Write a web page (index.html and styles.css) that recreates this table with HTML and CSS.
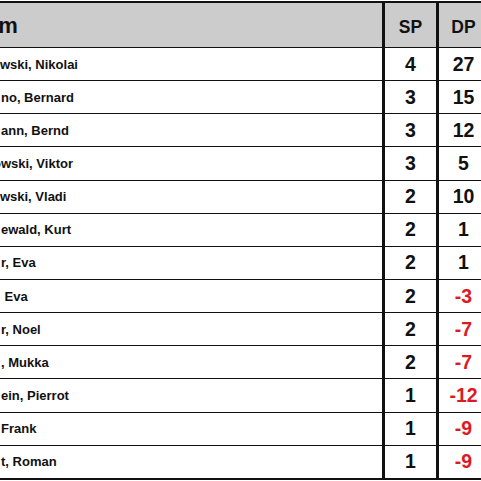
FILE: index.html
```html
<!DOCTYPE html>
<html>
<head>
<meta charset="utf-8">
<link rel="stylesheet" href="styles.css">
</head>
<body>
<div class="table">
  <div class="row head">
    <div class="name"><span class="shift-head">am</span></div>
    <div class="num">SP</div>
    <div class="num">DP</div>
  </div>
  <div class="row"><div class="name"><span class="shift2">owski, Nikolai</span></div><div class="num">4</div><div class="num">27</div></div>
  <div class="row"><div class="name">no, Bernard</div><div class="num">3</div><div class="num">15</div></div>
  <div class="row"><div class="name">ann, Bernd</div><div class="num">3</div><div class="num">12</div></div>
  <div class="row"><div class="name"><span class="shift1">owski, Viktor</span></div><div class="num">3</div><div class="num">5</div></div>
  <div class="row"><div class="name"><span class="shift2">owski, Vladi</span></div><div class="num">2</div><div class="num">10</div></div>
  <div class="row"><div class="name">ewald, Kurt</div><div class="num">2</div><div class="num">1</div></div>
  <div class="row"><div class="name">r, Eva</div><div class="num">2</div><div class="num">1</div></div>
  <div class="row"><div class="name">&nbsp;Eva</div><div class="num">2</div><div class="num neg">-3</div></div>
  <div class="row"><div class="name">r, Noel</div><div class="num">2</div><div class="num neg">-7</div></div>
  <div class="row"><div class="name">, Mukka</div><div class="num">2</div><div class="num neg">-7</div></div>
  <div class="row"><div class="name">ein, Pierrot</div><div class="num">1</div><div class="num neg">-12</div></div>
  <div class="row"><div class="name">Frank</div><div class="num">1</div><div class="num neg">-9</div></div>
  <div class="row last"><div class="name">t, Roman</div><div class="num">1</div><div class="num neg">-9</div></div>
</div>
</body>
</html>
```
FILE: styles.css
```css
html, body {
  margin: 0;
  padding: 0;
  background: #fff;
  overflow: hidden;
  width: 481px;
  height: 481px;
}
body {
  font-family: "Liberation Sans", Arial, sans-serif;
  color: #111;
}
.table {
  width: 488px;
  margin-top: 1px;
  border-top: 2px solid #111;
  border-bottom: 2px solid #111;
}
.row {
  display: grid;
  grid-template-columns: 382px 54px 52px;
  height: 33.15px;
  box-sizing: border-box;
  border-bottom: 1px solid #111;
}
.row.last {
  border-bottom: none;
  height: 32.15px;
}
.row.head {
  height: 45px;
  background: #cccccc;
}
.name {
  display: flex;
  align-items: center;
  padding-left: 1px;
  font-size: 13px;
  font-weight: bold;
  white-space: nowrap;
  overflow: hidden;
}
.head .name {
  font-size: 22px;
  padding-left: 0;
  padding-top: 2px;
}
.num {
  display: flex;
  align-items: center;
  justify-content: center;
  border-left: 3px solid #111;
  font-size: 19.5px;
  font-weight: bold;
}
.head .num {
  font-size: 17.5px;
  padding-top: 4px;
}
.neg {
  color: #dd1a1f;
}
.shift-head {
  margin-left: -14px;
}
.shift1 {
  margin-left: -8px;
}
.shift2 {
  margin-left: -9px;
}
```
